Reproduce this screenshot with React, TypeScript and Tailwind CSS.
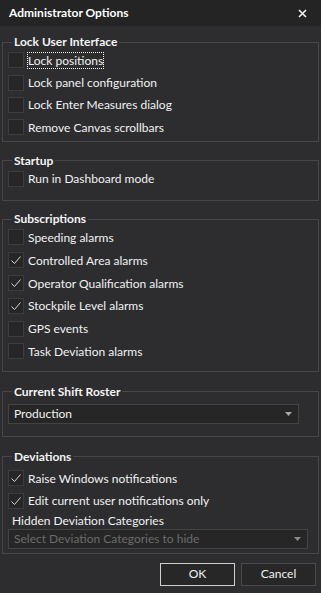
import { useState } from "react";

const font = { fontFamily: 'Lato, "Noto Sans", sans-serif' };

function Check({ label, checked, focus, h = "h-[22.5px]" }: { label: string; checked?: boolean; focus?: boolean; h?: string }) {
    return (
        <div className={`flex items-center ${h}`}>
            <div className="ml-[5px] flex h-[16px] w-[16px] shrink-0 items-center justify-center border border-[#3c3c3f] bg-[#262627]">
                {checked && (
                    <svg width="14" height="14" viewBox="0 0 14 14">
                        <polyline points="2.5,7.5 5.5,10.5 11.5,3.5" fill="none" stroke="#d6d6d6" strokeWidth="1" />
                    </svg>
                )}
            </div>
            <span
                className={`ml-[3px] text-[12px] leading-[15px] text-[#f1f1f1] ${
                    focus ? "border border-dotted border-white" : "border border-transparent"
                }`}
            >
                {label}
            </span>
        </div>
    );
}

function Group({ title, children, className = "" }: { title: string; children: React.ReactNode; className?: string }) {
    return (
        <fieldset className={`mx-[2px] border border-[#48484b] ${className}`}>
            <legend className="ml-[9px] px-[2px] text-[12px] font-bold leading-[16px] text-[#f4f4f4]">{title}</legend>
            {children}
        </fieldset>
    );
}

function Dropdown({ text, placeholder, className = "" }: { text: string; placeholder?: boolean; className?: string }) {
    return (
        <div className={`flex h-[20px] items-center justify-between border border-[#434346] bg-[#262627] pl-[5px] pr-[6px] ${className}`}>
            <span className={`text-[12px] leading-[15px] ${placeholder ? "text-[#6b6b6b]" : "text-[#f1f1f1]"}`}>{text}</span>
            <svg width="7" height="4" viewBox="0 0 7 4">
                <polygon points="0,0 7,0 3.5,4" fill={placeholder ? "#8a8a8a" : "#a8a8a8"} />
            </svg>
        </div>
    );
}

export default function App() {
    const [open] = useState(true);
    if (!open) return null;

    return (
        <div className="flex h-[593px] w-[321px] flex-col bg-[#2d2d30]" style={font}>
            {/* Title bar */}
            <div className="flex h-[26px] shrink-0 items-center justify-between bg-[#242425] pl-[9px] pr-[14px]">
                <span className="text-[12px] font-bold text-white">Administrator Options</span>
                <svg width="9" height="9" viewBox="0 0 9 9">
                    <path d="M1 1 L8 8 M8 1 L1 8" stroke="#f2f2f2" strokeWidth="1.6" />
                </svg>
            </div>

            <div className="flex flex-col pt-[8px]">
                <Group title="Lock User Interface" className="pb-[2px]">
                    <div className="-mt-[1px]">
                        <Check label="Lock positions" focus h="h-[22.4px]" />
                        <Check label="Lock panel configuration" h="h-[22.4px]" />
                        <Check label="Lock Enter Measures dialog" h="h-[22.4px]" />
                        <Check label="Remove Canvas scrollbars" h="h-[22.4px]" />
                    </div>
                </Group>

                <Group title="Startup" className="mt-[11px] pb-[10px]">
                    <div className="-mt-[1px]">
                        <Check label="Run in Dashboard mode" />
                    </div>
                </Group>

                <Group title="Subscriptions" className="mt-[10px] pb-[8px]">
                    <div className="-mt-[1px]">
                        <Check label="Speeding alarms" h="h-[22.8px]" />
                        <Check label="Controlled Area alarms" checked h="h-[22.8px]" />
                        <Check label="Operator Qualification alarms" checked h="h-[22.8px]" />
                        <Check label="Stockpile Level alarms" checked h="h-[22.8px]" />
                        <Check label="GPS events" h="h-[22.8px]" />
                        <Check label="Task Deviation alarms" h="h-[22.8px]" />
                    </div>
                </Group>

                <Group title="Current Shift Roster" className="mt-[12px] pb-[12px]">
                    <Dropdown text="Production" className="ml-[5px] mr-[19px] mt-[4px]" />
                </Group>

                <Group title="Deviations" className="mt-[12px] pb-[4px]">
                    <div className="mt-[2px]">
                        <Check label="Raise Windows notifications" checked />
                        <Check label="Edit current user notifications only" checked />
                    </div>
                    <div className="ml-[9px] mt-[1px] text-[12px] leading-[16px] text-[#f1f1f1]">Hidden Deviation Categories</div>
                    <Dropdown text="Select Deviation Categories to hide" placeholder className="ml-[5px] mr-[10px]" />
                </Group>
            </div>

            {/* Buttons */}
            <div className="mt-[9px] flex justify-end gap-[6px] pr-[5px]">
                <button className="h-[23px] w-[75px] border border-[#cfcfcf] bg-[#272728] text-[12px] text-[#f1f1f1]">OK</button>
                <button className="h-[23px] w-[75px] border border-[#4a4a4d] bg-[#272728] text-[12px] text-[#f1f1f1]">Cancel</button>
            </div>
        </div>
    );
}
